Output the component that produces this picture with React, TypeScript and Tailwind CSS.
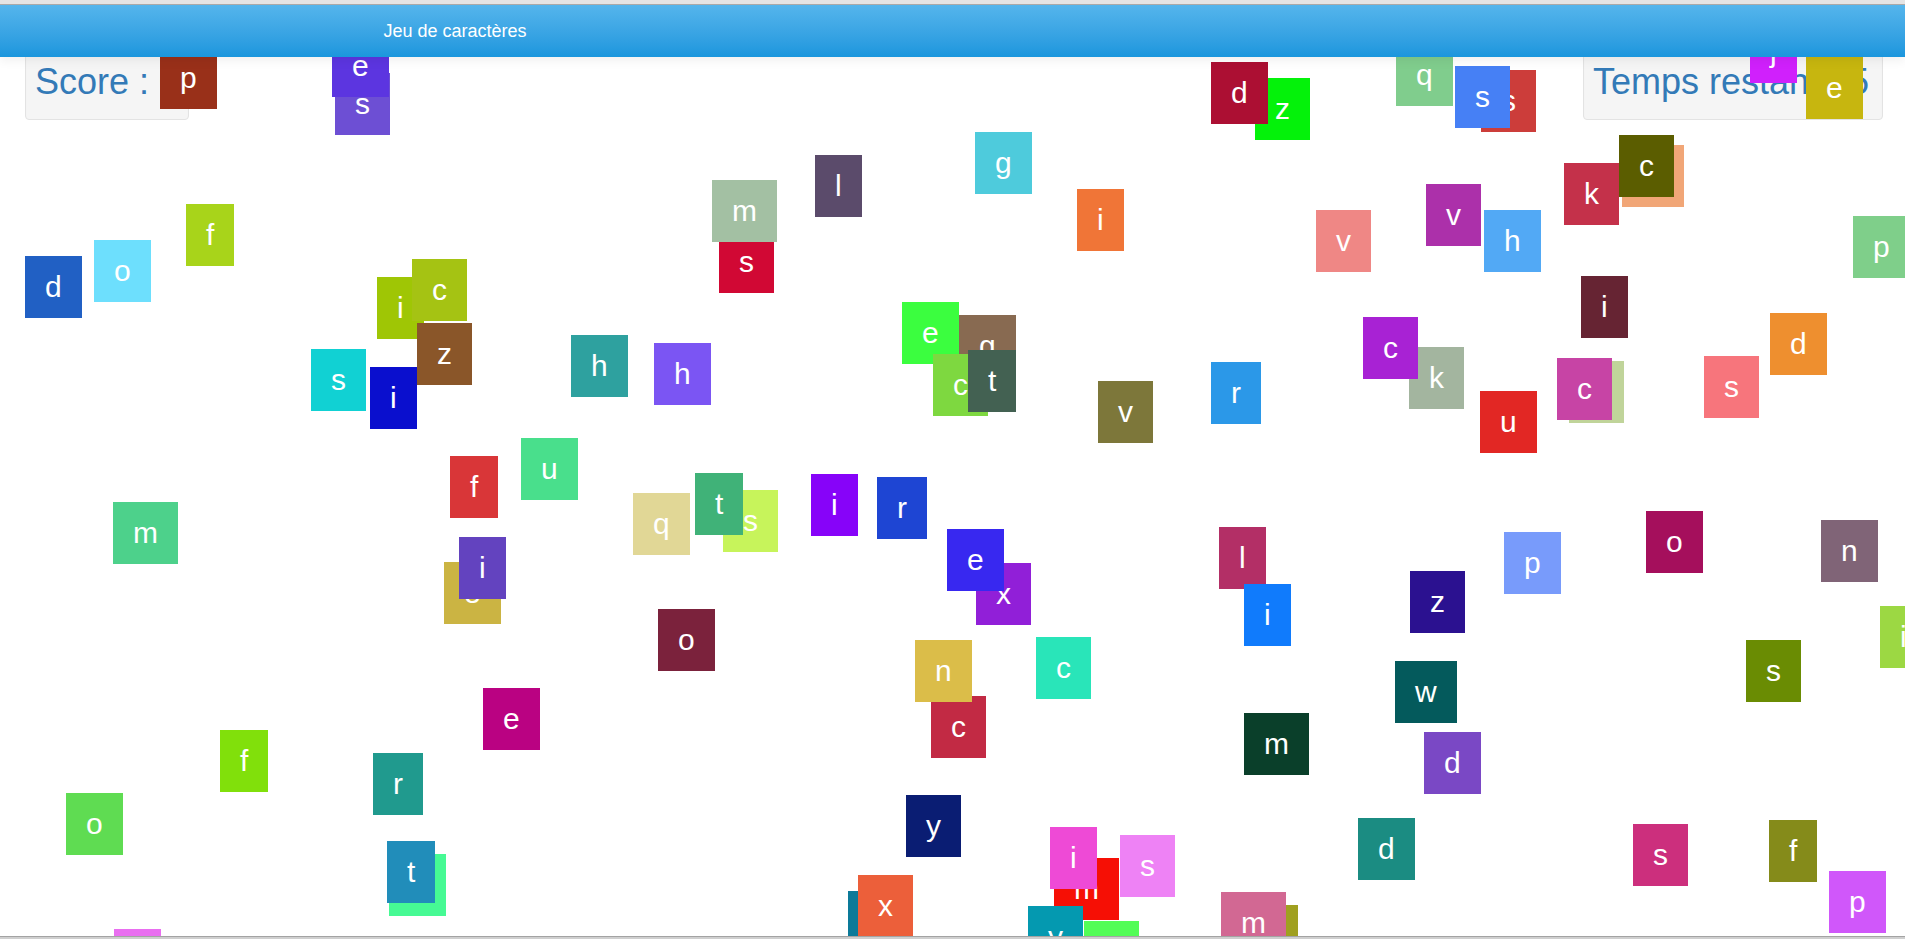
import React from 'react'

type Tile = [string, number, number, string]

// tuiles dans l'ordre d'affichage (les dernières passent au-dessus)
const tiles: Tile[] = [
  ['p', 160, 47, '#993019'],
  ['s', 335, 73, '#6d4fd4'],
  ['e', 332, 35, '#5c35e0'],
  ['d', 25, 256, '#2160c4'],
  ['o', 94, 240, '#6ddffd'],
  ['f', 186, 204, '#a8d41a'],
  ['i', 377, 277, '#9fc605'],
  ['c', 412, 259, '#a5c313'],
  ['s', 719, 231, '#d10834'],
  ['m', 712, 180, '#a3c0a3'],
  ['l', 815, 155, '#5b4b6b'],
  ['z', 1255, 78, '#04f20a'],
  ['d', 1211, 62, '#ac0f33'],
  ['g', 975, 132, '#4ecbdc'],
  ['i', 1077, 189, '#f07537'],
  ['v', 1316, 210, '#ef8785'],
  ['q', 1396, 44, '#80cd8d'],
  ['s', 1481, 70, '#cc3d3a'],
  ['s', 1455, 66, '#4680f5'],
  ['j', 1750, 21, '#d020fc'],
  ['e', 1806, 57, '#c7b60f'],
  ['k', 1564, 163, '#c4314a'],
  ['w', 1622, 145, '#f1a677'],
  ['c', 1619, 135, '#5b5d00'],
  ['v', 1426, 184, '#ac30aa'],
  ['h', 1484, 210, '#52a9f5'],
  ['p', 1853, 216, '#7fcf8a'],
  ['i', 1581, 276, '#662433'],
  ['d', 1770, 313, '#ee8f2f'],
  ['s', 311, 349, '#11d1d3'],
  ['i', 370, 367, '#0a0fce'],
  ['z', 417, 323, '#8a5629'],
  ['m', 113, 502, '#4dd18b'],
  ['f', 450, 456, '#d93638'],
  ['e', 444, 562, '#cbb443'],
  ['i', 459, 537, '#6343bf'],
  ['h', 571, 335, '#2ea19f'],
  ['h', 654, 343, '#7b55f3'],
  ['u', 521, 438, '#49df8c'],
  ['q', 633, 493, '#e1d796'],
  ['s', 723, 490, '#c7f45b'],
  ['t', 695, 473, '#40b278'],
  ['i', 811, 474, '#8703f9'],
  ['r', 877, 477, '#1e45d3'],
  ['e', 902, 302, '#3bfe3f'],
  ['g', 959, 315, '#886a51'],
  ['c', 933, 354, '#7ed840'],
  ['t', 968, 350, '#436152'],
  ['o', 658, 609, '#7b223c'],
  ['v', 1098, 381, '#7d773a'],
  ['r', 1211, 362, '#2b98e8'],
  ['k', 1409, 347, '#a3b59f'],
  ['c', 1363, 317, '#a822d4'],
  ['x', 976, 563, '#911fd8'],
  ['e', 947, 529, '#3828f0'],
  ['l', 1219, 527, '#b32f66'],
  ['i', 1244, 584, '#107bfc'],
  ['z', 1410, 571, '#2b1190'],
  ['u', 1480, 391, '#e22724'],
  ['k', 1569, 361, '#c0d49a'],
  ['c', 1557, 358, '#c744a5'],
  ['s', 1704, 356, '#f7757c'],
  ['o', 1646, 511, '#a50f5c'],
  ['n', 1821, 520, '#806477'],
  ['p', 1504, 532, '#789bfb'],
  ['i', 1880, 606, '#9cd843'],
  ['f', 220, 730, '#81e00b'],
  ['o', 66, 793, '#5fdc52'],
  ['r', 373, 753, '#209a8e'],
  ['u', 389, 854, '#46fa94'],
  ['t', 387, 841, '#218dba'],
  ['i', 114, 929, '#e96ef0'],
  ['e', 483, 688, '#ba0282'],
  ['c', 931, 696, '#c22a44'],
  ['n', 915, 640, '#dbbd49'],
  ['y', 906, 795, '#0a1d73'],
  ['v', 848, 891, '#0c7a99'],
  ['x', 858, 875, '#ec5f3a'],
  ['c', 1036, 637, '#29e5b9'],
  ['m', 1244, 713, '#0a3f2a'],
  ['w', 1395, 661, '#045a5c'],
  ['d', 1358, 818, '#1b8c82'],
  ['m', 1054, 858, '#f60f05'],
  ['i', 1050, 827, '#ee4ad6'],
  ['s', 1120, 835, '#ee82f5'],
  ['y', 1028, 906, '#0499b0'],
  ['c', 1084, 921, '#53fd57'],
  ['u', 1241, 905, '#a0a020'],
  ['m', 1221, 892, '#d26893'],
  ['s', 1746, 640, '#6a8c03'],
  ['d', 1424, 732, '#7a48c5'],
  ['s', 1633, 824, '#cc2f7d'],
  ['f', 1769, 820, '#858b1a'],
  ['p', 1829, 871, '#d057fa'],
]

function Well({ children, className = '' }: { children: React.ReactNode; className?: string }) {
  return (
    <div className={`rounded-[4px] border border-[#e3e3e3] bg-[#f5f5f5] px-[9px] pt-[21px] pb-[17px] shadow-[inset_0_1px_1px_rgba(0,0,0,0.05)] ${className}`}>
      <h1 className="whitespace-nowrap text-[36px] leading-[40px] text-[#337ab7]">{children}</h1>
    </div>
  )
}

export default function App() {
  return (
    <div className="h-[939px] w-[1905px] overflow-hidden bg-white font-['Liberation_Sans',Arial,sans-serif]">
      {/* barre du navigateur */}
      <div className="h-[5px] border-b border-[#a9a9a9] bg-[#e4e4e4]" />

      <div className="relative h-[931px] overflow-hidden">
        {/* Navbar */}
        <nav className="absolute inset-x-0 top-0 z-20 h-[52px] bg-gradient-to-b from-[#54b5ec] to-[#1a96dd] shadow-[0_4px_10px_rgba(0,0,0,0.06)]">
          <div className="mx-auto flex h-full w-[1170px] items-center px-[16px]">
            <span className="text-[18px] text-white">Jeu de caractères</span>
          </div>
        </nav>

        {/* Score / Temps */}
        <div className="flex justify-between pt-[35px] pl-[25px] pr-[22px]">
          <Well>Score : 0</Well>
          <Well className="w-[300px]">Temps restant : 5</Well>
        </div>

        {/* Lettres */}
        {tiles.map(([letter, x, y, color], idx) => (
          <div
            key={idx}
            className="absolute flex h-[62px] items-center px-[20px] text-[30px] leading-[normal] text-white"
            style={{ left: x, top: y - 5, backgroundColor: color }}
          >
            {letter}
          </div>
        ))}
      </div>

      <div className="h-[3px] border-t border-[#a3a3a3] bg-[#cfcfcf]" />
    </div>
  )
}
